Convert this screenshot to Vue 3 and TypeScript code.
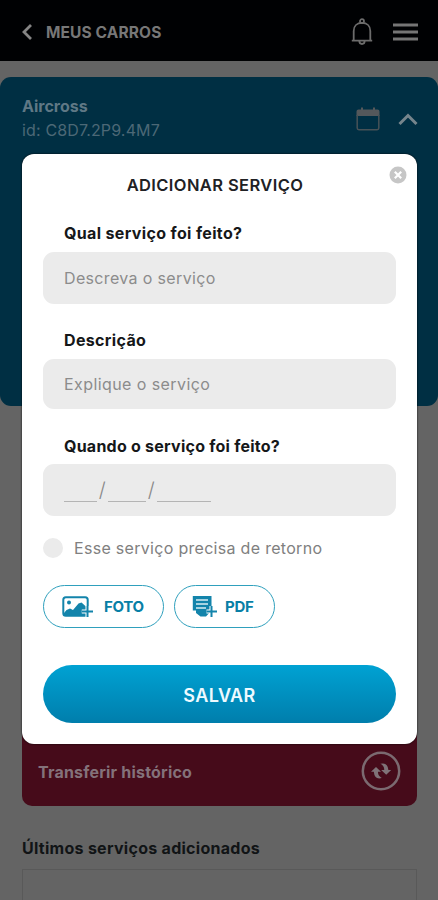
<script setup lang="ts">
import { ref } from 'vue'

interface Field {
  id: string
  label: string
  placeholder: string
}

const fields: Field[] = [
  { id: 'service', label: 'Qual serviço foi feito?', placeholder: 'Descreva o serviço' },
  { id: 'description', label: 'Descrição', placeholder: 'Explique o serviço' },
]
const needsReturn = ref(false)
</script>

<template>
  <div class="screen">
    <header class="topbar">
      <svg class="back" viewBox="0 0 12 18"><path d="M10 2 3 9l7 7" /></svg>
      <h1 class="page-title">MEUS CARROS</h1>
      <svg class="bell" viewBox="0 0 22 28">
        <circle cx="11" cy="3.2" r="2" />
        <path d="M2.7 22.5V13C2.7 8.100 6 4.900 11 4.900s8.300 3.200 8.300 8.100v9.500M.8 22.700h20.400M8.300 23c.2 4 5.200 4 5.400 0" />
      </svg>
      <svg class="menu" viewBox="0 0 25 18"><path d="M0 2h25M0 9h25M0 16h25" /></svg>
    </header>

    <section class="car">
      <div class="car-info">
        <strong class="car-name">Aircross</strong>
        <span class="car-id">id: C8D7.2P9.4M7</span>
      </div>
      <svg class="calendar" viewBox="0 0 24 24">
        <path class="solid" d="M.5 9V4.500Q.5 2.500 2.500 2.500H5V.5h2v2h10v-2h2v2h2.500q2 0 2 2V9z" />
        <path class="line" d="M1.200 8v13q0 1.700 1.700 1.700h18.200q1.700 0 1.700-1.700V8" />
      </svg>
      <svg class="collapse" viewBox="0 0 20 14"><path d="m1.500 12 8.500-8.500 8.500 8.500" /></svg>
    </section>

    <section class="transfer">
      <span class="transfer-label">Transferir histórico</span>
      <svg class="transfer-icon" viewBox="0 0 40 40">
        <circle cx="20" cy="20" r="18.200" />
        <path d="M10 20.800 15 16l5 4.800h-3q-.3 4 3.800 6.200-7.300 2-8-6.200zM30.200 19 25.200 23.800 20.200 19h3q.3-4-3.800-6.200 7.300-2 8 6.200z" />
      </svg>
    </section>
    <h2 class="recent-title">Últimos serviços adicionados</h2>
    <div class="recent-card"></div>

    <form class="modal" @submit.prevent>
      <button class="close" type="button" aria-label="Fechar">
        <svg viewBox="0 0 18 18"><circle cx="9" cy="9" r="8.500" /><path d="m5.800 5.800 6.400 6.400m0-6.400-6.400 6.400" /></svg>
      </button>
      <h2 class="modal-title">ADICIONAR SERVIÇO</h2>

      <div v-for="field in fields" :key="field.id" class="field" :class="field.id">
        <label class="label" :for="field.id">{{ field.label }}</label>
        <input :id="field.id" class="input" type="text" :placeholder="field.placeholder" />
      </div>
      <div class="field date">
        <span class="label">Quando o serviço foi feito?</span>
        <div class="input date-mask">
          <i class="blank day"></i><span class="slash">/</span>
          <i class="blank month"></i><span class="slash">/</span>
          <i class="blank year"></i>
        </div>
      </div>

      <label class="return">
        <input v-model="needsReturn" class="check" type="checkbox" />
        <span>Esse serviço precisa de retorno</span>
      </label>

      <div class="attachments">
        <button class="attach photo" type="button">
          <svg viewBox="0 0 32 23">
            <rect class="frame" x="1.300" y="2.300" width="24.400" height="18.400" rx="2.500" />
            <circle class="fill" cx="7" cy="7.500" r="2" />
            <path class="fill" d="m2 18 2.500-3 3.500-1.500 3 1.500 5.500-6.500 3-1 5.500 5v8H2z" />
            <path class="halo" d="M25.500 11v12M19.800 16.500h12" />
            <path class="plus" d="M25.500 11v11M20 16.500h11" />
          </svg>
          <span>FOTO</span>
        </button>
        <button class="attach pdf" type="button">
          <svg viewBox="0 0 26 23">
            <path class="fill" d="M.8 1h18.700v14.500L14 21.500H8.500L4 18v-2.500H.8z" />
            <path class="rule" d="M4 5h12M4 9h12M4 13h10" />
            <path class="halo" d="M19.500 11v12M14.500 16.500h12" />
            <path class="plus" d="M19.500 11v11M14.500 16.500H25" />
          </svg>
          <span>PDF</span>
        </button>
      </div>
      <button class="save" type="submit">SALVAR</button>
    </form>
  </div>
</template>

<style>
body {
  margin: 0;
  background: #646464;
}
</style>

<style scoped>
* {
  box-sizing: border-box;
}
.screen {
  position: relative;
  display: flex;
  flex-direction: column;
  height: 900px;
  overflow: hidden;
  background: #646464;
  font-family: Inter, 'Liberation Sans', sans-serif;
}
svg {
  display: block;
  flex: none;
  fill: none;
}
h1,
h2 {
  margin: 0;
}
button {
  font: inherit;
  padding: 0;
}
.topbar {
  display: flex;
  align-items: center;
  height: 60.500px;
  flex: none;
  padding: 3px 21px 0;
  background: #000103;
  color: #777;
}
.back {
  width: 12px;
  height: 18px;
  stroke: #858585;
  stroke-width: 2.800;
}
.page-title {
  flex: 1;
  margin-left: 13px;
  padding-top: 1px;
  font-size: 15.500px;
  font-weight: 700;
  letter-spacing: 0.120px;
}
.bell {
  width: 22px;
  height: 28px;
  margin-right: 20px;
  stroke: #6c6c6c;
  stroke-width: 1.800;
}
.menu {
  width: 25px;
  height: 18px;
  margin-right: -0.500px;
  stroke: #757575;
  stroke-width: 2.800;
}
.car {
  display: flex;
  align-items: flex-start;
  flex: none;
  height: 329px;
  margin-top: 16.500px;
  padding: 17px 20px 0 22px;
  border-radius: 11px;
  background: #002f43;
}
.car-info {
  flex: 1;
  display: flex;
  flex-direction: column;
  line-height: 24px;
  color: #5f7885;
}
.car-name {
  font-size: 16px;
}
.car-id {
  font-size: 16px;
  letter-spacing: 0.150px;
  color: #4c6876;
}
.calendar {
  width: 24px;
  height: 24px;
  margin: 13px 18px 0 0;
}
.solid {
  fill: #54585b;
}
.line {
  stroke: #475257;
  stroke-width: 1.500;
}
.collapse {
  width: 20px;
  height: 14px;
  margin-top: 18px;
  stroke: #76858c;
  stroke-width: 3;
}
.transfer {
  display: flex;
  align-items: center;
  justify-content: space-between;
  flex: none;
  height: 107px;
  margin: 293px 21px 0 22px;
  padding: 37px 16px 0;
  border-radius: 10px;
  background: #460b1a;
  color: #84727a;
}
.transfer-label {
  padding-top: 2px;
  font-size: 16px;
  font-weight: 700;
  letter-spacing: 0.200px;
}
.transfer-icon {
  width: 40px;
  height: 40px;
  margin-top: -1px;
}
.transfer-icon circle {
  stroke: #7b6a70;
  stroke-width: 2.500;
}
.transfer-icon path {
  fill: #7f7378;
}
.recent-title {
  margin: 31px 22px 0;
  line-height: 22px;
  font-size: 16px;
  font-weight: 700;
  letter-spacing: 0.280px;
  color: #111416;
}
.recent-card {
  flex: none;
  height: 50px;
  margin: 10px 21px 0 22px;
  border: 1px solid #595959;
}
.modal {
  position: absolute;
  top: 154px;
  left: 22px;
  width: 395px;
  height: 590px;
  padding: 19px 21px 0;
  border-radius: 12px;
  background: #fff;
  box-shadow: 0 0 2px #000;
}
.close {
  position: absolute;
  top: 12px;
  right: 10px;
  width: 18px;
  height: 18px;
  border: 0;
  background: none;
}
.close circle {
  fill: #c6c6c6;
}
.close path {
  stroke: #fff;
  stroke-width: 2.200;
}
.modal-title {
  line-height: 24px;
  text-align: center;
  font-size: 16.500px;
  font-weight: 600;
  letter-spacing: 0.400px;
  color: #202124;
  padding-right: 9px;
}
.field {
  display: flex;
  flex-direction: column;
}
.service {
  margin-top: 24px;
}
.description {
  margin-top: 24px;
}
.date {
  margin-top: 25px;
}
.label {
  height: 31px;
  padding-left: 21px;
  line-height: 24px;
  font-size: 16px;
  font-weight: 700;
  letter-spacing: 0.350px;
  color: #151719;
}
.date .label {
  height: 30px;
  letter-spacing: 0.240px;
}
.input {
  width: 100%;
  height: 52px;
  padding: 0 21px;
  border: 0;
  border-radius: 11px;
  background: #ebebeb;
  font: 400 16px Inter, sans-serif;
  letter-spacing: 0.350px;
  color: #888;
}
.description .input {
  height: 50px;
  letter-spacing: 0.420px;
}
.input::placeholder {
  color: #8c8c8c;
  opacity: 1;
}
.date-mask {
  display: flex;
  align-items: flex-end;
  padding-bottom: 14px;
}
.blank {
  height: 1.500px;
  background: #b4b4b4;
}
.day {
  width: 33px;
}
.month {
  width: 38px;
}
.year {
  width: 54px;
}
.slash {
  width: 11px;
  text-align: center;
  line-height: 24px;
  font-size: 20px;
  font-weight: 300;
}
.return {
  display: flex;
  align-items: center;
  gap: 11px;
  height: 24px;
  margin-top: 20px;
  font-size: 16px;
  letter-spacing: 0.300px;
  color: #808080;
}
.check {
  appearance: none;
  width: 20px;
  height: 20px;
  margin: 0;
  border-radius: 50%;
  background: #ebebeb;
}
.attachments {
  display: flex;
  gap: 10px;
  margin-top: 25px;
}
.attach {
  display: flex;
  align-items: center;
  height: 43px;
  border: 1.500px solid #2fa0bd;
  border-radius: 22px;
  background: #fff;
  font-size: 15px;
  font-weight: 700;
  letter-spacing: -0.300px;
  color: #087fa6;
}
.photo {
  width: 121px;
  padding-left: 18px;
}
.photo svg {
  width: 32px;
  height: 23px;
  margin-right: 10px;
}
.pdf {
  width: 101px;
  padding-left: 17px;
}
.pdf svg {
  width: 26px;
  height: 23px;
  margin-right: 7px;
}
.fill {
  fill: #1384ab;
}
.frame {
  stroke: #1384ab;
  stroke-width: 2;
}
.halo {
  stroke: #fff;
  stroke-width: 4;
}
.plus {
  stroke: #1384ab;
  stroke-width: 2;
}
.rule {
  stroke: #d8edf4;
  stroke-width: 1.400;
}
.save {
  display: block;
  width: 100%;
  height: 58px;
  margin-top: 37px;
  padding-top: 3px;
  border: 0;
  border-radius: 29px;
  background: linear-gradient(#00a2d3, #007eac);
  font-size: 18px;
  font-weight: 600;
  letter-spacing: 0.400px;
  color: #eefaff;
}
</style>
